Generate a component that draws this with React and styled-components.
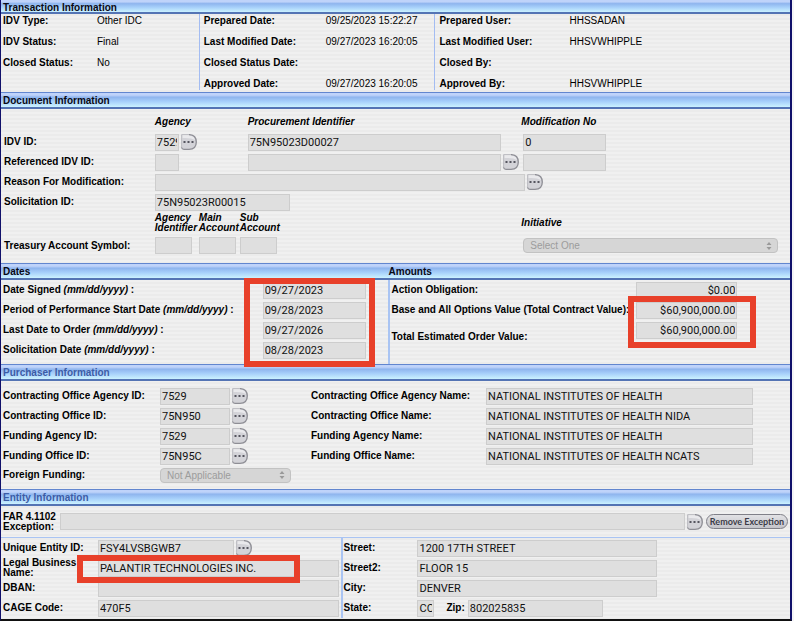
import React, { useId } from "react";
import styled, { createGlobalStyle } from "styled-components";

function Lookup({ label }) {
  return (
    <LookupButton type="button" aria-label={label}>
      <svg width="16" height="16" viewBox="0 0 16 16">
        <path d="M.6 .6H8Q15.3 1 15.3 8Q15.3 15.3 8 15.3H3Q.6 15.3 .6 13Z" fill="#d3d3d8" />
        <path d="M1.5 2V1H8Q13 1.5 14 6Q10 3.5 1.5 4Z" fill="#e9e9ec" />
        <path d="M.6 14V.6H8" fill="none" stroke="#bcbcc2" />
        <path d="M8 .6Q15.3 1 15.3 8Q15.3 15.3 8 15.3H3Q.9 15.2 .6 13.5" fill="none" stroke="#8e8e95" strokeWidth="1.3" />
        <path d="M2.5 7h2v2h-2zM6.5 7h2v2h-2zM10.5 7h2v2h-2z" fill="#55555e" />
      </svg>
    </LookupButton>
  );
}

function Entry({ label, value = "", lookup, width }) {
  const id = useId();
  return (
    <>
      <Label htmlFor={id}>{label}</Label>
      <Cell>
        <Input id={id} defaultValue={value} $width={width} readOnly />
        {lookup && <Lookup label={`Look up ${label}`} />}
      </Cell>
    </>
  );
}

function Picker({ id, text, width }) {
  return (
    <SelectBox $width={width}>
      <select id={id} disabled>
        <option>{text}</option>
      </select>
      <svg width="6" height="8" viewBox="0 0 6 8">
        <path d="M3 0L5.5 3H.5ZM3 8L.5 5H5.5Z" fill="#999" />
      </svg>
    </SelectBox>
  );
}

const transaction = [
  [["IDV Type:", "Other IDC"], ["IDV Status:", "Final"], ["Closed Status:", "No"]],
  [
    ["Prepared Date:", "09/25/2023 15:22:27"],
    ["Last Modified Date:", "09/27/2023 16:20:05"],
    ["Closed Status Date:", ""],
    ["Approved Date:", "09/27/2023 16:20:05"],
  ],
  [
    ["Prepared User:", "HHSSADAN"],
    ["Last Modified User:", "HHSVWHIPPLE"],
    ["Closed By:", ""],
    ["Approved By:", "HHSVWHIPPLE"],
  ],
];

const dates = [
  ["Date Signed", "09/27/2023"],
  ["Period of Performance Start Date", "09/28/2023"],
  ["Last Date to Order", "09/27/2026"],
  ["Solicitation Date", "08/28/2023"],
];

const amounts = [
  ["Action Obligation:", "$0.00"],
  ["Base and All Options Value (Total Contract Value):", "$60,900,000.00"],
  ["Total Estimated Order Value:", "$60,900,000.00"],
];

const offices = [
  ["Contracting Office Agency ID:", "7529", "Contracting Office Agency Name:", "NATIONAL INSTITUTES OF HEALTH"],
  ["Contracting Office ID:", "75N950", "Contracting Office Name:", "NATIONAL INSTITUTES OF HEALTH NIDA"],
  ["Funding Agency ID:", "7529", "Funding Agency Name:", "NATIONAL INSTITUTES OF HEALTH"],
  ["Funding Office ID:", "75N95C", "Funding Office Name:", "NATIONAL INSTITUTES OF HEALTH NCATS"],
];

function App() {
  return (
    <>
      <GlobalStyle />
      <Page>
        <Bar $first>
          <h2>Transaction Information</h2>
        </Bar>
        <Transaction>
          {transaction.map((group, i) => (
            <Facts key={i} $col={i}>
              {group.map(([term, value]) => (
                <React.Fragment key={term}>
                  <dt>{term}</dt>
                  <dd>{value}</dd>
                </React.Fragment>
              ))}
            </Facts>
          ))}
        </Transaction>

        <Bar>
          <h2>Document Information</h2>
        </Bar>
        <DocumentGrid>
          <span />
          <Heading>Agency</Heading>
          <Heading>Procurement Identifier</Heading>
          <Heading>Modification No</Heading>

          <Label htmlFor="idv">IDV ID:</Label>
          <Cell>
            <Input id="idv" defaultValue="7529" $width="24px" readOnly />
            <Lookup label="Look up agency" />
          </Cell>
          <ProcurementCell>
            <Input aria-label="Procurement Identifier" defaultValue="75N95023D00027" readOnly />
            <Spacer />
          </ProcurementCell>
          <ModificationCell>
            <Input aria-label="Modification No" defaultValue="0" $width="83px" readOnly />
          </ModificationCell>

          <Label htmlFor="refidv">Referenced IDV ID:</Label>
          <Cell>
            <Input id="refidv" $width="24px" readOnly />
          </Cell>
          <ProcurementCell>
            <Input aria-label="Referenced Procurement Identifier" readOnly />
            <Lookup label="Look up referenced IDV" />
          </ProcurementCell>
          <ModificationCell>
            <Input aria-label="Referenced Modification No" $width="83px" readOnly />
          </ModificationCell>

          <Label htmlFor="reason">Reason For Modification:</Label>
          <ReasonCell>
            <Input id="reason" readOnly />
            <Lookup label="Look up reason" />
          </ReasonCell>

          <Label htmlFor="solicitation">Solicitation ID:</Label>
          <WideCell>
            <Input id="solicitation" defaultValue="75N95023R00015" $width="135px" readOnly />
          </WideCell>

          <span />
          <Accounts>
            <Heading>Agency Identifier</Heading>
            <Heading>Main Account</Heading>
            <Heading>Sub Account</Heading>
          </Accounts>
          <Heading as="label" htmlFor="initiative">Initiative</Heading>

          <Label htmlFor="tas">Treasury Account Symbol:</Label>
          <Accounts>
            <Input id="tas" $width="37px" readOnly />
            <Input aria-label="Main Account" $width="37px" readOnly />
            <Input aria-label="Sub Account" $width="37px" readOnly />
          </Accounts>
          <ModificationCell>
            <Picker id="initiative" text="Select One" width="255px" />
          </ModificationCell>
        </DocumentGrid>

        <Bar $split>
          <h2>Dates</h2>
          <h2>Amounts</h2>
        </Bar>
        <Halves>
          <Dates>
            {dates.map(([label, value], i) => (
              <React.Fragment key={label}>
                <Label htmlFor={`date${i}`}>
                  {label} <em>(mm/dd/yyyy)</em> :
                </Label>
                <Cell>
                  <Input id={`date${i}`} defaultValue={value} readOnly />
                </Cell>
              </React.Fragment>
            ))}
            <DatesMark />
          </Dates>
          <Amounts>
            {amounts.map(([label, value], i) => (
              <React.Fragment key={label}>
                <Label htmlFor={`amount${i}`}>{label}</Label>
                <Cell>
                  <Input id={`amount${i}`} defaultValue={value} $right readOnly />
                </Cell>
              </React.Fragment>
            ))}
            <AmountsMark />
          </Amounts>
        </Halves>

        <Bar $blue>
          <h2>Purchaser Information</h2>
        </Bar>
        <Purchaser>
          {offices.map(([idLabel, id, nameLabel, name]) => (
            <React.Fragment key={idLabel}>
              <Entry label={idLabel} value={id} width="70px" lookup />
              <Entry label={nameLabel} value={name} />
            </React.Fragment>
          ))}
          <Label htmlFor="foreign">Foreign Funding:</Label>
          <Picker id="foreign" text="Not Applicable" width="131px" />
        </Purchaser>

        <Bar $blue>
          <h2>Entity Information</h2>
        </Bar>
        <Exception>
          <Label htmlFor="far">FAR 4.1102 Exception:</Label>
          <Input id="far" readOnly />
          <Lookup label="Look up exception" />
          <RemoveButton type="button">Remove Exception</RemoveButton>
        </Exception>
        <Entity>
          <Vendor>
            <Entry label="Unique Entity ID:" value="FSY4LVSBGWB7" width="136px" lookup />
            <Entry label="Legal Business Name:" value="PALANTIR TECHNOLOGIES INC." />
            <Entry label="DBAN:" />
            <Entry label="CAGE Code:" value="470F5" />
            <VendorMark />
          </Vendor>
          <Address>
            <Entry label="Street:" value="1200 17TH STREET" />
            <Entry label="Street2:" value="FLOOR 15" />
            <Entry label="City:" value="DENVER" />
            <Label htmlFor="state">State:</Label>
            <Cell>
              <Input id="state" defaultValue="CO" $width="17px" readOnly />
              <ZipLabel htmlFor="zip">Zip:</ZipLabel>
              <Input id="zip" defaultValue="802025835" $width="135px" readOnly />
            </Cell>
          </Address>
        </Entity>
      </Page>
    </>
  );
}

const GlobalStyle = createGlobalStyle`
  * {
    box-sizing: border-box;
  }
  body {
    margin: 0;
    background: #f4f4f6;
    color: #000;
    font-family: "Liberation Sans", Arial, sans-serif;
    font-size: 10px;
    line-height: 10px;
  }
`;

const Page = styled.div`
  margin-right: 2px;
  border: solid #10106a;
  border-width: 0 2px 0 1px;
  border-bottom: 2px solid #111;
  background: repeating-linear-gradient(#f0f0f0 0 2px, #ebebeb 2px 4px);
`;

const Bar = styled.div`
  display: grid;
  grid-template-columns: ${(p) => (p.$split ? "387fr 403fr" : "1fr")};
  align-items: center;
  height: ${(p) => (p.$first ? "14px" : "17px")};
  padding: 2px 0 0 2px;
  border-top: ${(p) => (p.$first ? "0" : "1px solid #6286cf")};
  border-bottom: 2px solid #5474b4;
  background: linear-gradient(#bfd3fa 0 15%, #8fb5ee 30%, #a6cffa 60%, #cbf2ff);
  color: ${(p) => (p.$blue ? "#3c5ca6" : "#0a0a14")};

  h2 {
    margin: 0;
    font-size: 10px;
    line-height: 12px;
  }
`;

const Transaction = styled.div`
  display: grid;
  grid-template-columns: 198fr 236fr 356fr;
  padding-bottom: 2px;
`;

const Facts = styled.dl`
  display: grid;
  grid-template-columns: ${(p) => ["94px", "122px", "130px"][p.$col]} 1fr;
  grid-auto-rows: 13px;
  row-gap: 8px;
  align-items: center;
  margin: 0;
  padding-left: ${(p) => (p.$col ? "4px" : "2px")};
  border-left: ${(p) => (p.$col ? "1px solid #a3bcf2" : "0")};

  dt {
    font-weight: bold;
  }
  dd {
    margin: 0;
  }
`;

const Label = styled.label`
  font-weight: bold;
`;

const Heading = styled.span`
  font-weight: bold;
  font-style: italic;
`;

const Input = styled.input`
  flex: ${(p) => (p.$width ? "none" : "1")};
  width: ${(p) => p.$width || "100%"};
  min-width: 0;
  height: 17px;
  padding: 0 1px;
  border: 1px solid #cdcdcd;
  border-radius: 0;
  outline: 0;
  background: #dfdfdf;
  color: #111;
  font: 11px/15px Roboto, "Liberation Sans", sans-serif;
  text-align: ${(p) => (p.$right ? "right" : "left")};
`;

const LookupButton = styled.button`
  flex: none;
  width: 16px;
  height: 16px;
  padding: 0;
  border: 0;
  background: none;

  svg {
    display: block;
  }
`;

const Cell = styled.div`
  display: flex;
  align-items: center;
  gap: 2px;
  min-width: 0;
`;

const Spacer = styled.span`
  width: 16px;
`;

const ProcurementCell = styled(Cell)`
  padding-right: 2px;
`;

const ModificationCell = styled(Cell)`
  padding-left: 2px;
`;

const WideCell = styled(Cell)`
  grid-column: 2 / -1;
`;

const ReasonCell = styled(WideCell)`
  margin-right: 247px;
`;

const DocumentGrid = styled.div`
  display: grid;
  grid-template-columns: 151fr 93fr 274fr 269fr;
  grid-template-rows: 20px 20px 20px 20px 20px 22px 23px;
  align-items: center;
  padding: 3px 0 6px 3px;
`;

const Accounts = styled.div`
  grid-column: 2 / 4;
  display: grid;
  grid-template-columns: 40px 37px 37px;
  column-gap: 4px;
`;

const SelectBox = styled.div`
  display: flex;
  align-items: center;
  width: ${(p) => p.$width};
  height: 15px;
  padding-right: 5px;
  border: 1px solid #c2c2c2;
  border-radius: 4px;
  background: #d6d6d6;

  select {
    flex: 1;
    min-width: 0;
    height: 13px;
    padding: 0 6px;
    border: 0;
    appearance: none;
    background: none;
    color: #9c9c9c;
    opacity: 1;
    font: 10px/13px "Liberation Sans", Arial, sans-serif;
  }
`;

const Halves = styled.div`
  display: grid;
  grid-template-columns: 387fr 403fr;
`;

const Dates = styled.div`
  position: relative;
  display: grid;
  grid-template-columns: 260fr 103fr 22fr;
  grid-template-rows: repeat(4, 20px);
  align-items: center;
  padding: 0 0 4px 2px;

  > ${Label} {
    grid-column: 1;
  }
`;

const Amounts = styled.div`
  position: relative;
  display: grid;
  grid-template-columns: 246fr 102fr 53fr;
  grid-template-rows: 20px 20px 34px;
  padding-left: 2px;
  border-left: 2px solid #a9c4f3;

  > ${Label} {
    grid-column: 1;
    align-self: center;
    white-space: nowrap;
  }
  > ${Cell} {
    height: 20px;
  }
`;

const Mark = styled.div`
  position: absolute;
  z-index: 1;
  border: 6px solid #e8402a;
  pointer-events: none;
`;

const DatesMark = styled(Mark)`
  grid-area: 1 / 2 / 5 / 3;
  inset: -2px -9px -7px -19px;
`;

const AmountsMark = styled(Mark)`
  grid-area: 2 / 2 / 4 / 3;
  inset: -4px -19px 6px -8px;
`;

const Purchaser = styled.div`
  display: grid;
  grid-template-columns: 157fr 151fr 175fr 267fr 37fr;
  grid-template-rows: repeat(4, 20px) 18px;
  align-items: center;
  padding: 5px 0 5px 2px;

  > ${Label}:nth-child(4n + 1) {
    grid-column: 1;
  }
`;

const Exception = styled.div`
  display: flex;
  align-items: center;
  gap: 2px;
  height: 32px;
  padding: 0 2px;
  border-bottom: 1px solid #a9c4f3;

  ${Label} {
    flex: none;
    width: 55px;
  }
`;

const RemoveButton = styled.button`
  flex: none;
  width: 82px;
  height: 15px;
  margin-left: 1px;
  padding: 0;
  border: 1px solid #808088;
  border-radius: 8px;
  background: linear-gradient(#e2e2e5, #c4c4ca);
  color: #3c3c48;
  font: bold 9px/12px Lato, sans-serif;
  white-space: nowrap;
`;

const Entity = styled.div`
  display: grid;
  grid-template-columns: 340fr 450fr;
  padding-bottom: 1px;
`;

const Vendor = styled.div`
  position: relative;
  display: grid;
  grid-template-columns: 95fr 241fr 2fr;
  grid-template-rows: repeat(4, 20px);
  align-items: center;
  padding-left: 2px;

  > ${Label} {
    grid-column: 1;
  }
`;

const VendorMark = styled(Mark)`
  grid-area: 2 / 2 / 3 / 3;
  inset: -3px 39px -5px -21px;
`;

const Address = styled.div`
  display: grid;
  grid-template-columns: 74fr 240fr 133fr;
  grid-template-rows: repeat(4, 20px);
  align-items: center;
  padding-left: 1px;
  border-left: 2px solid #a9c4f3;

  > ${Label} {
    grid-column: 1;
  }
`;

const ZipLabel = styled(Label)`
  margin: 0 1px 0 10px;
`;

export default App;
